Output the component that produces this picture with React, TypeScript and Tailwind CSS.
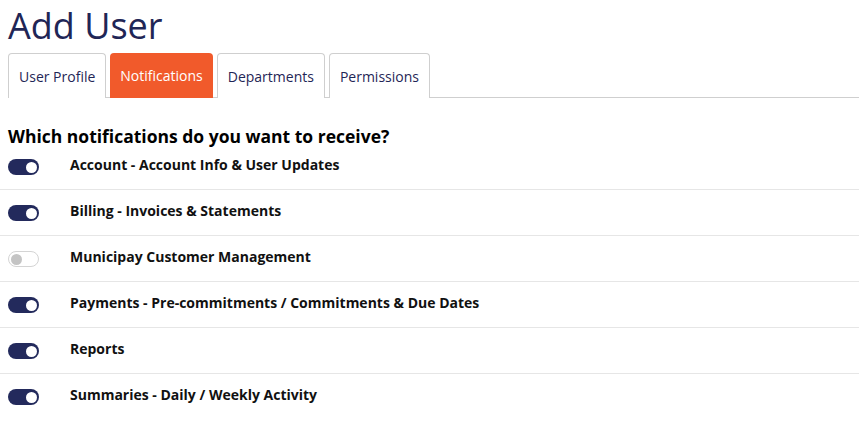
import React from 'react';

const tabs = ['User Profile', 'Notifications', 'Departments', 'Permissions'];

const rows = [
  { label: 'Account - Account Info & User Updates', on: true },
  { label: 'Billing - Invoices & Statements', on: true },
  { label: 'Municipay Customer Management', on: false },
  { label: 'Payments - Pre-commitments / Commitments & Due Dates', on: true },
  { label: 'Reports', on: true },
  { label: 'Summaries - Daily / Weekly Activity', on: true },
];

const Toggle: React.FC<{ on: boolean }> = ({ on }) =>
  on ? (
    <div className="w-[31px] h-[16px] rounded-full bg-[#232a5c] flex items-center justify-end pr-[2px] shrink-0">
      <div className="w-[11px] h-[11px] rounded-full bg-white" />
    </div>
  ) : (
    <div className="w-[31px] h-[16px] rounded-full bg-white border border-[#d4d4d4] flex items-center pl-[2px] shrink-0">
      <div className="w-[11px] h-[11px] rounded-full bg-[#c4c4c4]" />
    </div>
  );

export default function App() {
  return (
    <div className="w-[859px] h-[422px] bg-white overflow-hidden" style={{ fontFamily: '"Open Sans", sans-serif' }}>
      {/* Title */}
      <h1 className="pl-[8px] pt-[2px] text-[36px] leading-[48px] font-medium text-[#1f2656]">Add User</h1>

      {/* Tabs */}
      <div className="ml-[8px] mt-[3px] flex gap-[4px] border-b border-[#cfcfcf] h-[45px]">
        {tabs.map((t, i) =>
          i === 1 ? (
            <div key={t} className="h-[45px] px-[10px] flex items-center rounded-t-[4px] bg-[#f15a2b] text-white text-[14px] font-medium">
              {t}
            </div>
          ) : (
            <div key={t} className="h-[45px] px-[10px] flex items-center rounded-t-[4px] border border-b-0 border-[#cfcfcf] text-[#1f2656] text-[14px] font-medium bg-white">
              {t}
            </div>
          )
        )}
      </div>

      {/* Heading */}
      <h2 className="pl-[8px] pt-[27px] text-[17.5px] leading-[22px] font-bold text-black">
        Which notifications do you want to receive?
      </h2>

      {/* Rows */}
      <div className="mt-[-3px]">
        {rows.map((r, i) => (
          <div
            key={r.label}
            className={`h-[46px] flex items-start pl-[8px] ${i < rows.length - 1 ? 'border-b border-[#e6e6e6]' : ''}`}
          >
            <div className="mt-[15px]">
              <Toggle on={r.on} />
            </div>
            <div className="ml-[31px] mt-[11px] text-[14px] leading-[20px] font-bold text-[#111]">{r.label}</div>
          </div>
        ))}
      </div>
    </div>
  );
}
